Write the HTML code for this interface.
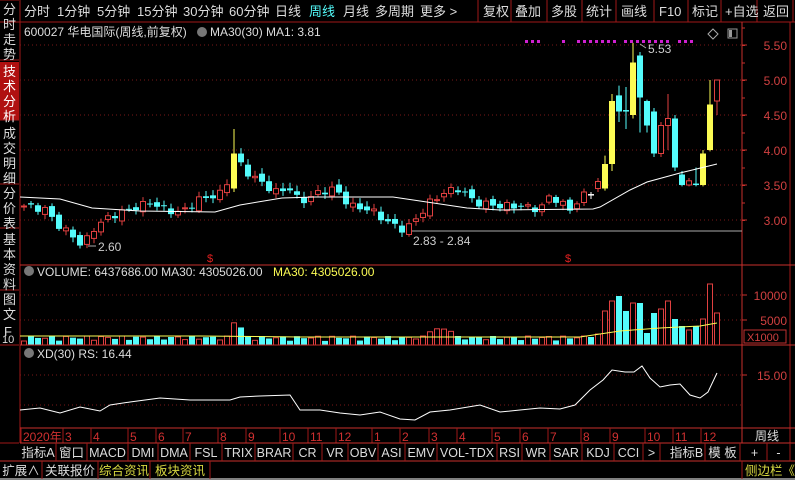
<!DOCTYPE html>
<html><head><meta charset="utf-8"><style>
*{margin:0;padding:0;box-sizing:border-box}
body{width:795px;height:480px;background:#000;overflow:hidden;font-family:"Liberation Sans","Noto Sans CJK SC",sans-serif;font-size:12px;color:#ddd;position:relative}
.a{position:absolute;white-space:nowrap}
svg{position:absolute;left:0;top:0}
</style></head><body>
<svg id="s" width="795" height="480" xmlns="http://www.w3.org/2000/svg" font-family="Liberation Sans, Noto Sans CJK SC, sans-serif" font-size="12"></svg>
<script>
var s=document.getElementById('s'),h='';
function L(x1,y1,x2,y2,c,w,d){h+='<line x1="'+x1+'" y1="'+y1+'" x2="'+x2+'" y2="'+y2+'" stroke="'+c+'" stroke-width="'+(w||1)+'"'+(d?' stroke-dasharray="'+d+'"':'')+'/>';}
function R(x,y,w,hh,f,st){h+='<rect x="'+x+'" y="'+y+'" width="'+w+'" height="'+hh+'" fill="'+f+'"'+(st?' stroke="'+st+'"':'')+'/>';}
function T(x,y,t,c,sz,a){h+='<text x="'+x+'" y="'+y+'" fill="'+c+'" font-size="'+(sz||12)+'"'+(a?' text-anchor="'+a+'"':'')+'>'+t+'</text>';}
function P(pts,c,w){h+='<polyline fill="none" stroke="'+c+'" stroke-width="'+(w||1)+'" points="'+pts.map(function(p){return p.join(',')}).join(' ')+'"/>';}
var RED='#c8302c',CY='#54fcfc',YL='#fcfc54';
// frame
R(0,0,795,480,'#000');
// toolbar
L(0,22,742,22,'#a01818');L(20,0,20,443,'#a01818');
var tb=[['分时',24],['1分钟',57],['5分钟',97],['15分钟',137],['30分钟',183],['60分钟',229],['日线',275],['周线',309],['月线',343],['多周期',375],['更多 >',420]];
tb.forEach(function(t){T(t[1],16,t[0],t[0]=='周线'?CY:'#ddd',13)});
var bt=[['复权',483],['叠加',515],['多股',551],['统计',586],['画线',621],['F10',659],['标记',692],['+自选',725],['返回',763]];
[478,511,547,582,616,654,688,721,757,793].forEach(function(x){L(x,0,x,22,'#a01818')});
bt.forEach(function(t){T(t[1],16,t[0],'#ddd',13)});
L(478,22,795,22,'#a01818');
// left sidebar
R(0,62,19,58,'#b01010');
[0,60,120,184,228,290,345,443].forEach(function(y){L(0,y,19,y,'#a01818')});
function V(x,y,arr,c){arr.forEach(function(ch,i){T(x,y+i*15,ch,c,13)})}
V(3,14,['分','时','走','势'],'#ddd');V(3,76,['技','术','分','析'],'#fff');V(3,138,['成','交','明','细'],'#ddd');
V(3,198,['分','价','表'],'#ddd');V(3,244,['基','本','资','料'],'#ddd');V(3,304,['图','文'],'#ddd');T(4,336,'F','#ddd',13);T(2,343,'10','#ddd',11);
// right axis
L(742,22,742,443,RED);L(790,22,790,443,'#a01818');
function py(p){return 45+(5.5-p)*70}
[5.5,5,4.5,4,3.5,3].forEach(function(p){var y=py(p);L(20,y,742,y,'#7a1818',1,'1 3');L(742,y,747,y,RED);T(787,y+5,p.toFixed(2),'#d04040',12,'end')});
for(var k=0;k<12;k++){var y=28+k*17.5;L(742,y,745,y,RED)}
// purple dots
[525,531,537,562,577,583,589,595,601,607,613,624,630,636,642,648,654,660,666,678,684,690].forEach(function(x){R(x,40,3,3,'#d020d0')});
h+='<path d="M713 29l5 5-5 5-5-5z" fill="none" stroke="#aaa"/>';R(728,29,9,9,'none','#999');R(729,30,3,7,'#999');
// title
T(24,36,'600027 华电国际(周线,前复权)','#ddd',12);h+='<circle cx="202" cy="32" r="5" fill="#777"/>';T(210,36,'MA30(30)  MA1: 3.81','#ddd',12);
// gray support line
L(410,231,742,231,'#aaa');
// candles
var N=100,X=function(i){return 24+7*i};
var kp=[[24,3.2],[45,3.15],[60,2.9],[75,2.75],[82,2.62],[95,2.9],[110,3.05],[130,3.15],[150,3.25],[165,3.15],[180,3.1],[200,3.3],[215,3.35],[225,3.4],[233,3.95],[245,3.7],[260,3.55],[275,3.4],[290,3.45],[300,3.25],[320,3.4],[335,3.45],[350,3.2],[370,3.15],[390,2.95],[405,2.85],[415,3.0],[430,3.25],[445,3.4],[460,3.45],[475,3.25],[500,3.2],[520,3.2],[540,3.15],[550,3.35],[570,3.15],[580,3.3]];
function ip(x){for(var j=1;j<kp.length;j++){if(x<=kp[j][0]){var a=kp[j-1],b=kp[j],t=(x-a[0])/(b[0]-a[0]);return a[1]+(b[1]-a[1])*t}}return kp[kp.length-1][1]}
var C=[];var prev=3.2;
for(var i=0;i<80;i++){var c=ip(X(i))+0.05*Math.sin(i*2.3);var o=prev+0.04*Math.sin(i*1.7);
 var hi=Math.max(o,c)+0.03+0.05*Math.abs(Math.sin(i*3.1)),lo=Math.min(o,c)-0.03-0.04*Math.abs(Math.cos(i*2.2));
 C.push([o,c,hi,lo,c>=o?'r':'c']);prev=c;}
C[30]=[3.45,3.95,4.3,3.4,'y'];
var tail=[[3.25,3.4,3.45,3.2,'r'],[3.34,3.36,3.4,3.3,'x'],[3.45,3.55,3.6,3.4,'r'],[3.45,3.8,3.92,3.42,'y'],[3.8,4.7,4.8,3.7,'y'],[4.78,4.55,4.92,4.4,'c'],[4.55,4.56,4.9,4.3,'x'],[4.5,5.25,5.53,4.45,'y'],[5.35,4.75,5.4,4.25,'c'],[4.7,4.35,4.72,4.25,'c'],[4.55,3.95,4.6,3.9,'c'],[3.95,4.35,4.4,3.9,'r'],[4.35,4.45,4.8,4.0,'r'],[4.45,3.75,4.5,3.7,'c'],[3.65,3.5,3.7,3.48,'c'],[3.5,3.56,3.6,3.48,'r'],[3.5,3.51,3.75,3.48,'x'],[3.5,3.95,4.0,3.48,'y'],[4.0,4.65,5.0,3.98,'y'],[4.7,5.0,5.0,4.5,'r']];
C=C.concat(tail);
C.forEach(function(k,i){var x=X(i),o=k[0],c=k[1],t=k[4];
 var col=t=='r'?'#e04040':t=='y'?YL:t=='x'?(i%2?'#fff':CY):CY;
 L(x,py(k[2]),x,py(k[3]),col);
 var top=py(Math.max(o,c)),bh=Math.max(1,Math.abs(py(o)-py(c)));
 if(t=='r')R(x-2.5,top,5,bh,'#000','#e04040');else if(t=='x')L(x-3,top,x+3,top,col,1.5);else R(x-3,top,6,bh,col);
});
// MA30
P([[20,197],[60,199],[92,208],[140,211],[215,212],[240,205],[282,198],[315,197],[393,197],[420,201],[467,208],[500,210],[593,209],[600,207],[630,190],[647,182],[680,173],[717,164]],'#fff');
// annotations
L(88,246,96,246,'#aaa');T(98,251,'2.60','#ccc');T(413,245,'2.83 - 2.84','#ccc');
L(640,44,646,48,'#aaa');T(648,53,'5.53','#ccc');
T(210,262,'$','#e02020',11,'middle');T(568,262,'$','#e02020',11,'middle');
// volume panel
L(20,265,795,265,RED);h+='<circle cx="29" cy="271" r="5" fill="#777"/>';
T(37,276,'VOLUME: 6437686.00  MA30: 4305026.00','#ddd');T(273,276,'MA30: 4305026.00',YL);
function vy(v){return 345-v*0.005}
[10000,5000].forEach(function(v){var y=vy(v);L(20,y,742,y,'#7a1818',1,'1 3');L(742,y,747,y,RED);T(787,y+5,String(v),'#d04040',12,'end')});
R(744,330,42,13,'none','#c03030');T(747,341,'X1000','#d04040',11);
var vt=[336,337,334,311,301,296,311,303,303,333,313,309,301,319,326,330,326,319,284,313];
C.forEach(function(k,i){var x=X(i),top;
 if(i>=80)top=vt[i-80];else top=345-(4+5*Math.abs(Math.sin(i*1.9))+(i==30?16:0)+(i==31?10:0)+(i>=58&&i<=61?8:0));
 var red=(k[4]=='r'||k[4]=='y');if(i>=80){red='rcrrrccrcccrrccrcrrr'[i-80]=='r'}
 if(red)R(x-2.5,top,5,345-top,'#000','#e04040');else R(x-3,top,6,345-top,CY);
});
P([[20,336],[200,336],[300,337],[400,337],[580,337],[620,331],[660,328],[700,326],[717,323]],YL);
L(20,345,795,345,RED);
// RS panel
h+='<circle cx="29" cy="353" r="5" fill="#777"/>';T(37,358,'XD(30)  RS: 16.44','#ddd');
L(20,375,742,375,'#7a1818',1,'1 3');L(20,405,742,405,'#7a1818',1,'1 3');L(742,375,747,375,RED);T(787,380,'15.00','#d04040',12,'end');
P([[20,410],[40,408],[60,413],[80,407],[100,411],[110,405],[130,402],[160,398],[190,400],[230,400],[240,397],[260,396],[290,395],[300,410],[320,410],[340,413],[360,415],[380,412],[400,419],[415,420],[430,412],[450,410],[480,405],[500,412],[520,410],[540,408],[560,409],[575,405],[590,390],[603,380],[612,370],[625,372],[634,372],[642,366],[650,378],[660,387],[670,385],[680,384],[690,395],[700,398],[708,392],[717,373]],'#fff');
// date axis
L(20,428,742,428,RED);L(742,428,795,428,RED);
[['2020年',23],['3',65],['4',93],['5',130],['6',158],['7',185],['8',220],['9',248],['10',282],['11',310],['12',338],['1',374],['2',402],['3',431],['4',459],['5',494],['6',522],['7',550],['8',583],['9',612],['10',647],['11',675],['12',703]].forEach(function(m){L(m[1]-2,428,m[1]-2,443,'#a01818');T(m[1],441,m[0],'#d03030',12)});
T(755,440,'周线','#ddd',12);
// tabs
L(20,443,795,443,RED);L(0,461,795,461,RED);
var tabs=[['指标A',20,56],['窗口',56,87],['MACD',87,128],['DMI',128,158],['DMA',158,190],['FSL',190,222],['TRIX',222,255],['BRAR',255,293],['CR',293,322],['VR',322,348],['OBV',348,378],['ASI',378,405],['EMV',405,437],['VOL-TDX',437,497],['RSI',497,522],['WR',522,550],['SAR',550,582],['KDJ',582,614],['CCI',614,643],['>',643,660],['指标B',668,705],['模 板',705,740],['+',742,767],['-',767,790]];
tabs.forEach(function(t){L(t[2],443,t[2],461,'#a01818');T((t[1]+t[2])/2,457,t[0],'#ddd',12.5,'middle')});
// bottom
L(0,479,795,479,'#fff');
[['扩展∧',0,42,'#ddd'],['关联报价',42,98,'#ddd'],['综合资讯',98,150,'#d8d840'],['板块资讯',150,210,'#d8d840']].forEach(function(t){L(t[2],461,t[2],479,'#a01818');T((t[1]+t[2])/2,475,t[0],t[3],12.5,'middle')});
L(742,461,742,479,'#a01818');T(745,475,'侧边栏《','#d8d840',12.5);
s.innerHTML=h;
</script>
</body></html>
